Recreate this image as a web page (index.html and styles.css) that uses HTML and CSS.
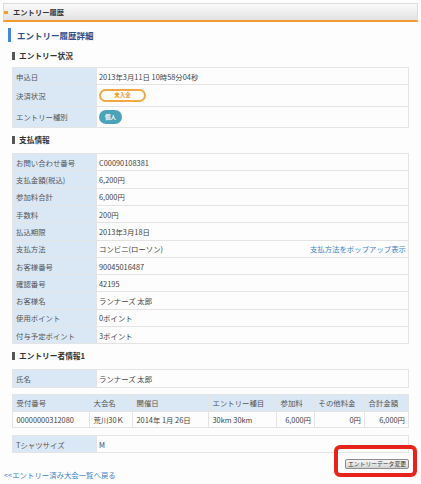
FILE: index.html
```html
<!DOCTYPE html>
<html lang="ja">
<head>
<meta charset="utf-8">
<title>エントリー履歴詳細</title>
<link rel="stylesheet" href="styles.css">
</head>
<body>
<div class="page">
  <div class="hdr"><span class="hdr-mark"></span><span class="hdr-text">エントリー履歴</span></div>
  <h1 class="title">エントリー履歴詳細</h1>

  <h2 class="sub sub-first">エントリー状況</h2>
  <div class="dl">
    <div class="row"><div class="th">申込日</div><div class="td">2013年3月11日 10時58分04秒</div></div>
    <div class="row r-tall"><div class="th">決済状況</div><div class="td"><span class="pill pill-unpaid">未入金</span></div></div>
    <div class="row r-tall"><div class="th">エントリー種別</div><div class="td"><span class="pill pill-indiv">個人</span></div></div>
  </div>

  <h2 class="sub">支払情報</h2>
  <div class="dl">
    <div class="row"><div class="th">お問い合わせ番号</div><div class="td">C00090108381</div></div>
    <div class="row"><div class="th">支払金額(税込)</div><div class="td">6,200円</div></div>
    <div class="row"><div class="th">参加料合計</div><div class="td">6,000円</div></div>
    <div class="row"><div class="th">手数料</div><div class="td">200円</div></div>
    <div class="row"><div class="th">払込期限</div><div class="td">2013年3月18日</div></div>
    <div class="row"><div class="th">支払方法</div><div class="td td-split"><span>コンビニ(ローソン)</span><a class="popup" href="#">支払方法をポップアップ表示</a></div></div>
    <div class="row"><div class="th">お客様番号</div><div class="td">90045016487</div></div>
    <div class="row"><div class="th">確認番号</div><div class="td">42195</div></div>
    <div class="row"><div class="th">お客様名</div><div class="td">ランナーズ 太郎</div></div>
    <div class="row"><div class="th">使用ポイント</div><div class="td">0ポイント</div></div>
    <div class="row"><div class="th">付与予定ポイント</div><div class="td">3ポイント</div></div>
  </div>

  <h2 class="sub">エントリー者情報1</h2>
  <div class="dl">
    <div class="row"><div class="th">氏名</div><div class="td">ランナーズ 太郎</div></div>
  </div>

  <div class="grid7">
    <div class="gh">受付番号</div>
    <div class="gh">大会名</div>
    <div class="gh">開催日</div>
    <div class="gh">エントリー種目</div>
    <div class="gh">参加料</div>
    <div class="gh">その他料金</div>
    <div class="gh">合計金額</div>
    <div class="gd">00000000312080</div>
    <div class="gd">荒川30Ｋ</div>
    <div class="gd">2014年 1月 26日</div>
    <div class="gd">30km 30km</div>
    <div class="gd num">6,000円</div>
    <div class="gd num">0円</div>
    <div class="gd num">6,000円</div>
  </div>

  <div class="dl dl-shirt">
    <div class="row"><div class="th">Tシャツサイズ</div><div class="td">M</div></div>
  </div>

  <div class="btn-row"><button class="btn" type="button">エントリーデータ変更</button></div>
  <a class="back" href="#">&lt;&lt;エントリー済み大会一覧へ戻る</a>

  <div class="mark-box"></div>
</div>
</body>
</html>
```

FILE: styles.css
```css
* { box-sizing: border-box; margin: 0; padding: 0; }

body {
  background: #fdfdfd;
  font-family: "Noto Sans CJK JP", "Noto Sans", sans-serif;
  font-size: 7.4px;
  color: #444;
}

.page {
  position: relative;
  padding: 3px 3px 0;
  height: 484px;
  overflow: hidden;
}

.hdr {
  height: 19px;
  border: 1px solid #dcdcdc;
  border-bottom: 2px solid #f39a31;
  background: linear-gradient(#fafafa, #e2e2e2);
  display: flex;
  align-items: center;
}
.hdr-mark { width: 4px; height: 3px; background: #f39a31; }
.hdr-text { margin-left: 5px; font-weight: bold; font-size: 7.3px; color: #333; }

.title {
  margin: 6px 0 0 5px;
  border-left: 3px solid #4288d6;
  padding-left: 6px;
  height: 14px;
  line-height: 14px;
  font-size: 8.5px;
  font-weight: bold;
  color: #2d4f8e;
}

.sub {
  margin: 8px 9px 9px;
  border-left: 3px solid #555;
  padding-left: 4px;
  height: 8px;
  line-height: 8px;
  font-size: 7.7px;
  font-weight: bold;
  color: #333;
}
.sub-first { margin-top: 10px; margin-bottom: 7px; }

.dl {
  margin: 0 9px;
  border: 1px solid #e4e4e4;
  border-bottom: none;
}
.row {
  display: grid;
  grid-template-columns: 84px 1fr;
  height: 17.3px;
  border-bottom: 1px solid #e4e4e4;
}
.r-tall { height: 21.4px; }
.th {
  background: #dae8f6;
  border-right: 1px solid #e4e4e4;
  padding-left: 3px;
  display: flex;
  align-items: center;
  color: #555;
  white-space: nowrap;
}
.td {
  padding-left: 2px;
  display: flex;
  align-items: center;
  color: #444;
  white-space: nowrap;
}
.td-split { justify-content: space-between; padding-right: 2px; }
.popup { color: #3b82c8; text-decoration: none; }

.pill {
  display: inline-flex;
  align-items: center;
  justify-content: center;
  border-radius: 7px;
  font-weight: bold;
  font-size: 5.5px;
}
.pill-unpaid {
  width: 47px;
  height: 13px;
  border: 2px solid #f3a844;
  color: #eb931f;
  background: #fff;
}
.pill-indiv {
  width: 23px;
  height: 14px;
  background: #4ba3b9;
  color: #fff;
}

.grid7 {
  margin: 6px 9px 0;
  display: grid;
  grid-template-columns: 77px 43px 76px 68px 38px 50px 1fr;
  grid-template-rows: 17px 16.5px;
  border-top: 1px solid #e4e4e4;
  border-left: 1px solid #e4e4e4;
}
.gh, .gd {
  border-right: 1px solid #e4e4e4;
  border-bottom: 1px solid #e4e4e4;
  padding: 0 3px 0 3.5px;
  display: flex;
  align-items: center;
  white-space: nowrap;
}
.gh { background: #dae8f6; color: #555; }
.gd { color: #444; }
.gd.num { justify-content: flex-end; }

.dl-shirt { margin-top: 6.8px; }

.btn-row {
  display: flex;
  justify-content: flex-end;
  margin: 6px 9px 0 0;
}
.btn {
  width: 64px;
  height: 10px;
  font-family: inherit;
  font-size: 5.8px;
  line-height: 8px;
  color: #333;
  border: 1px solid #8c8c8c;
  border-radius: 2px;
  background: linear-gradient(#f5f5f5, #d4d4d4);
}

.back {
  display: block;
  margin-left: 1px;
  line-height: 11px;
  color: #3b7fc6;
  text-decoration: none;
}

.mark-box {
  position: absolute;
  left: 334px;
  top: 445px;
  width: 83px;
  height: 32px;
  border: 4px solid #e8231c;
  border-radius: 6px;
}
```
